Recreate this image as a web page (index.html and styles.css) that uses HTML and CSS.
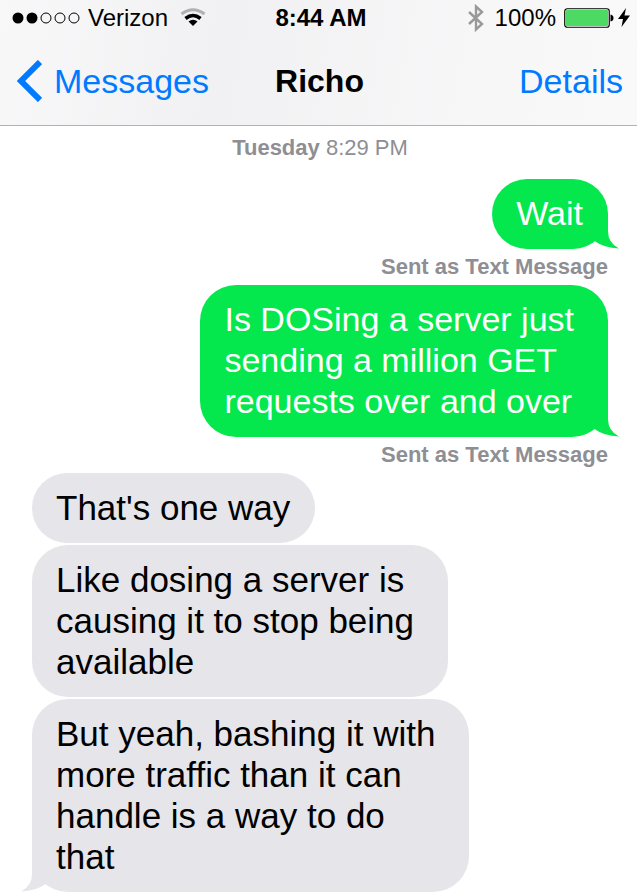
FILE: index.html
```html
<!DOCTYPE html>
<html lang="en">
<head>
<meta charset="utf-8">
<meta name="viewport" content="width=device-width, initial-scale=1">
<title>Messages - Richo</title>
<link rel="stylesheet" href="styles.css">
</head>
<body>
<header class="top">
  <div class="status">
    <div class="status-left">
      <svg class="signal" width="68" height="14" viewBox="0 0 68 14" aria-hidden="true">
        <circle cx="6" cy="7" r="5.5"/><circle cx="20" cy="7" r="5.5"/>
        <g fill="none" stroke="#000"><circle cx="34" cy="7" r="5"/><circle cx="48" cy="7" r="5"/><circle cx="62" cy="7" r="5"/></g>
      </svg>
      <span>Verizon</span>
      <svg class="wifi" width="26" height="20" viewBox="0 0 26 20" aria-hidden="true">
        <path d="M1.500 6Q13-2.500 24.500 6" fill="none" stroke="#b0b0b0" stroke-width="3"/>
        <path d="M5.500 10.500Q13 4.500 20.500 10.500" fill="none" stroke="#000" stroke-width="3.600"/>
        <path d="M8.500 13.500Q13 10.200 17.500 13.500L13 18Z"/>
      </svg>
    </div>
    <time class="clock">8:44 AM</time>
    <div class="status-right">
      <svg class="bluetooth" width="16" height="28" viewBox="0 0 16 28" aria-hidden="true">
        <path d="M1 8L14 20L8 25.500V2.500L14 8L1 20" fill="none" stroke="#999" stroke-width="2.400"/>
      </svg>
      <span>100%</span>
      <svg class="battery" width="50" height="20" viewBox="0 0 50 20" aria-hidden="true">
        <rect x=".75" y=".75" width="44.500" height="18.500" rx="2.500" fill="#fff" stroke="#000" stroke-width="1.200"/>
        <rect x="2" y="2" width="42" height="16" rx="1" fill="#4cd964"/>
        <path d="M46.500 6.500Q49.500 7 49.500 10T46.500 13.500Z"/>
      </svg>
      <svg class="bolt" width="12" height="20" viewBox="0 0 12 20" aria-hidden="true">
        <path d="M8 0L0 11H5L3.500 19L12 7.500H6.500Z"/>
      </svg>
    </div>
  </div>
  <nav class="nav">
    <a class="back" href="#messages">
      <svg width="26" height="42" viewBox="0 0 26 42" aria-hidden="true"><path d="M24 2L5 21L24 40" fill="none" stroke="#007aff" stroke-width="6"/></svg>
      <span>Messages</span>
    </a>
    <h1 class="name">Richo</h1>
    <a class="details" href="#details">Details</a>
  </nav>
</header>
<main class="thread">
  <p class="stamp"><b>Tuesday</b> 8:29 PM</p>
  <div class="bubble sent">Wait
    <svg class="tail" width="32" height="36" viewBox="0 0 32 36" aria-hidden="true"><path d="M0 30Q4 29 6.500 28Q16 35 31 35.500Q20 30 20 18V0L0 18Z"/></svg>
  </div>
  <p class="receipt">Sent as Text Message</p>
  <div class="bubble sent multiline">Is DOSing a server just<br>sending a million GET<br>requests over and over
    <svg class="tail" width="32" height="36" viewBox="0 0 32 36" aria-hidden="true"><path d="M0 30Q4 29 6.500 28Q16 35 31 35.500Q20 30 20 18V0L0 18Z"/></svg>
  </div>
  <p class="receipt">Sent as Text Message</p>
  <div class="bubble received">That's one way</div>
  <div class="bubble received multiline">Like dosing a server is<br>causing it to stop being<br>available</div>
  <div class="bubble received multiline">But yeah, bashing it with<br>more traffic than it can<br>handle is a way to do<br>that
    <svg class="tail" width="32" height="36" viewBox="0 0 32 36" aria-hidden="true"><path d="M32 30Q28 29 25.500 28Q16 35 1 35.500Q12 30 12 18V0L32 18Z"/></svg>
  </div>
</main>
</body>
</html>
```
FILE: styles.css
```css
* {
  box-sizing: border-box;
}

body {
  margin: 0;
  background: #fff;
  color: #000;
  font-family: "Liberation Sans", Arial, sans-serif;
}

p,
h1 {
  margin: 0;
}

a {
  color: #007aff;
  text-decoration: none;
}

svg {
  display: block;
  flex: none;
}

.top {
  background: linear-gradient(100deg, #f8f8f9, #f1f1f3 35%, #f7f7f8 75%, #f9f9fa);
  border-bottom: 1px solid #b2b2b2;
}

.status,
.nav {
  display: grid;
  grid-template-columns: 1fr auto 1fr;
  align-items: center;
}

.status {
  height: 36px;
  padding: 0 7px 0 12px;
  font-size: 24px;
}

.status-left,
.status-right {
  display: flex;
  align-items: center;
  gap: 8px;
}

.status-right {
  justify-content: flex-end;
}

.wifi {
  margin-left: 4px;
}

.bluetooth {
  margin-right: 3px;
}

.bolt {
  margin-left: -4px;
}

.clock {
  font-weight: bold;
}

.nav {
  height: 89px;
  padding: 1px 14px 0 16px;
  font-size: 34px;
}

.back {
  display: flex;
  align-items: center;
  gap: 12px;
}

.name {
  font-size: 32px;
  font-weight: bold;
}

.details {
  justify-self: end;
}

.thread {
  display: flex;
  flex-direction: column;
  padding: 0 29px 4px 32px;
}

.stamp {
  margin-bottom: 9px;
  text-align: center;
  font-size: 22px;
  line-height: 44px;
  color: #8e8e93;
}

.bubble {
  position: relative;
  width: fit-content;
  padding: 14px 25px 15px 24px;
  border-radius: 36px;
  font-size: 34px;
  line-height: 41px;
}

.multiline {
  padding-right: 34px;
}

.sent {
  align-self: flex-end;
  background: #04e84d;
  color: #fff;
}

.received {
  margin-bottom: 2px;
  background: #e5e5ea;
  font-size: 35px;
}

.tail {
  position: absolute;
  bottom: 0;
}

.sent .tail {
  right: -12px;
  fill: #04e84d;
}

.received .tail {
  left: -12px;
  fill: #e5e5ea;
}

.receipt {
  align-self: flex-end;
  font-size: 22px;
  font-weight: bold;
  line-height: 36px;
  color: #8e8e93;
}
```
